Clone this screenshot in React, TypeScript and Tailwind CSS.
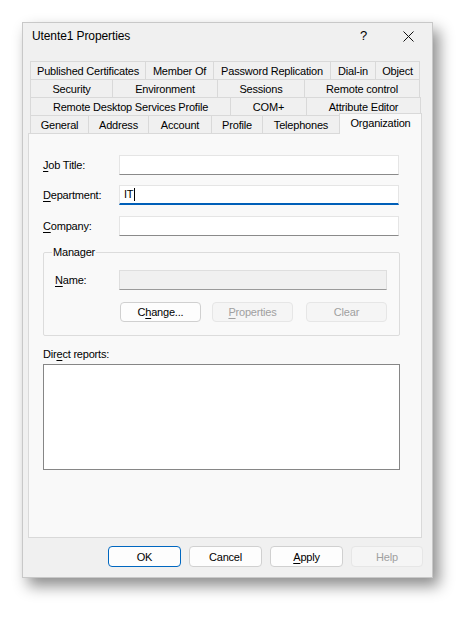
import React from "react";

type Tab = { name: string; w: string };

const rows: Tab[][] = [
  [
    { name: "Published Certificates", w: "w-[116px]" },
    { name: "Member Of", w: "w-[69px]" },
    { name: "Password Replication", w: "w-[118px]" },
    { name: "Dial-in", w: "w-[46px]" },
    { name: "Object", w: "w-[45px]" },
  ],
  [
    { name: "Security", w: "w-[83px]" },
    { name: "Environment", w: "w-[106px]" },
    { name: "Sessions", w: "w-[88px]" },
    { name: "Remote control", w: "w-[116px]" },
  ],
  [
    { name: "Remote Desktop Services Profile", w: "w-[201px]" },
    { name: "COM+", w: "w-[77px]" },
    { name: "Attribute Editor", w: "w-[115px]" },
  ],
  [
    { name: "General", w: "w-[59px]" },
    { name: "Address", w: "w-[61px]" },
    { name: "Account", w: "w-[64px]" },
    { name: "Profile", w: "w-[52px]" },
    { name: "Telephones", w: "w-[78px]" },
  ],
];

function Mn({ pre, k, post }: { pre?: string; k: string; post?: string }) {
  return (
    <span>
      {pre}
      <span className="underline underline-offset-[2px] decoration-[1px]">{k}</span>
      {post}
    </span>
  );
}

function Field({ label, value, focused }: { label: React.ReactNode; value?: string; focused?: boolean }) {
  return (
    <div className="flex items-center h-[20px]">
      <div className="w-[76px] shrink-0">{label}</div>
      <div
        className={`w-[280px] h-[20px] bg-white border border-[#e5e5e5] flex items-center px-[4px] ${
          focused ? "border-b-2 border-b-[#005fb8]" : "border-b-[#8a8a8a]"
        }`}
      >
        {value}
        {focused && <span className="w-px h-[13px] bg-black ml-px" />}
      </div>
    </div>
  );
}

function Btn({
  children,
  w,
  disabled,
  primary,
  h = "h-[20px]",
  pt = "",
}: {
  children: React.ReactNode;
  w: string;
  disabled?: boolean;
  primary?: boolean;
  h?: string;
  pt?: string;
}) {
  return (
    <div
      className={`${w} ${h} ${pt} rounded-[4px] flex items-center justify-center border ${
        disabled
          ? "bg-[#f5f5f5] border-[#e6e6e6] text-[#a0a0a0]"
          : primary
          ? "bg-[#fdfdfd] border-[#0067c0] text-black"
          : "bg-[#fdfdfd] border-[#d0d0d0] text-black"
      }`}
    >
      {children}
    </div>
  );
}

export default function App() {
  return (
    <div
      className="min-h-[619px] bg-white pt-[22px] pl-[22px] text-[11px] tracking-[-0.2px] text-black whitespace-nowrap"
      style={{ fontFamily: '"Segoe UI", "Liberation Sans", Arial, sans-serif' }}
    >
      <div className="w-[411px] h-[556px] bg-[#f0f0f0] border border-[#c8c8c8] shadow-[6px_8px_14px_rgba(0,0,0,0.45)] flex flex-col">
        {/* Title bar */}
        <div className="h-[26px] flex items-center pl-[9px] shrink-0">
          <span className="text-[12px] tracking-[-0.1px]">Utente1 Properties</span>
          <span className="ml-auto mr-[36px] text-[13px]">?</span>
          <svg width="11" height="11" viewBox="0 0 11 11" className="mr-[18px]">
            <path d="M0.5 0.5 L10.5 10.5 M10.5 0.5 L0.5 10.5" stroke="#111" strokeWidth="1" />
          </svg>
        </div>

        {/* Tabs */}
        <div className="ml-[7px] mt-[12px] flex flex-col">
          {rows.map((row, i) => (
            <div key={i} className="flex h-[18px] items-end">
              {row.map((t, j) => (
                <div
                  key={t.name}
                  className={`${t.w} h-[18px] border border-b-0 border-[#d9d9d9] bg-[#f0f0f0] flex items-center justify-center leading-none pt-[2px] ${
                    j > 0 ? "-ml-px" : ""
                  }`}
                >
                  {t.name}
                </div>
              ))}
              {i === 3 && (
                <div className="relative z-10 w-[83px] h-[21px] -ml-px -mb-px border border-b-0 border-[#d9d9d9] bg-[#f9f9f9] flex items-start pt-[4px] justify-center leading-none">
                  Organization
                </div>
              )}
            </div>
          ))}
        </div>

        {/* Panel */}
        <div className="ml-[5px] w-[394px] h-[405px] border border-[#d9d9d9] bg-[#f9f9f9] pl-[14px] pt-[21px] shrink-0">
          <div className="flex flex-col">
            <Field label={<Mn k="J" post="ob Title:" />} />
            <div className="h-[10px]" />
            <Field label={<Mn k="D" post="epartment:" />} value="IT" focused />
            <div className="h-[11px]" />
            <Field label={<Mn k="C" post="ompany:" />} />
          </div>

          {/* Manager group */}
          <div className="relative mt-[16px] w-[357px] h-[84px] border border-[#dcdcdc] rounded-[2px]">
            <span className="absolute -top-[8px] left-[8px] px-[1px] bg-[#f9f9f9] leading-[14px]">Manager</span>
            <div className="flex items-center mt-[17px] ml-[11px]">
              <div className="w-[64px]">
                <Mn k="N" post="ame:" />
              </div>
              <div className="w-[268px] h-[20px] bg-[#f0f0f0] border border-[#dedede] border-b-[#9a9a9a]" />
            </div>
            <div className="flex mt-[12px] ml-[76px]">
              <Btn w="w-[81px]">
                <Mn pre="C" k="h" post="ange..." />
              </Btn>
              <div className="w-[11px]" />
              <Btn w="w-[81px]" disabled>
                <Mn k="P" post="roperties" />
              </Btn>
              <div className="w-[13px]" />
              <Btn w="w-[81px]" disabled>
                Clear
              </Btn>
            </div>
          </div>

          <div className="mt-[10px] h-[16px] leading-[16px]">
            <Mn pre="Dir" k="e" post="ct reports:" />
          </div>
          <div className="mt-[2px] w-[357px] h-[106px] bg-white border border-[#868686]" />
        </div>

        {/* Bottom buttons */}
        <div className="flex justify-end gap-[8px] pr-[9px] mt-[8px]">
          <Btn w="w-[73px]" h="h-[21px]" pt="pt-[2px]" primary>
            OK
          </Btn>
          <Btn w="w-[73px]" h="h-[21px]" pt="pt-[2px]">
            Cancel
          </Btn>
          <Btn w="w-[73px]" h="h-[21px]" pt="pt-[2px]">
            <Mn k="A" post="pply" />
          </Btn>
          <Btn w="w-[72px]" h="h-[21px]" pt="pt-[2px]" disabled>
            Help
          </Btn>
        </div>
      </div>
    </div>
  );
}
